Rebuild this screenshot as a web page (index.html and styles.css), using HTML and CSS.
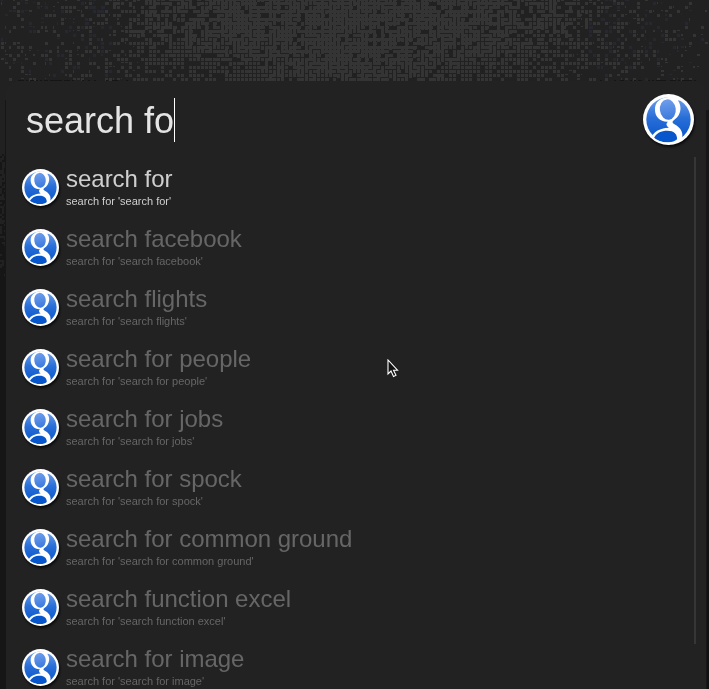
FILE: index.html
```html
<!DOCTYPE html>
<html lang="en">
<head>
<meta charset="utf-8">
<title>Search</title>
<link rel="stylesheet" href="styles.css">
</head>
<body>
<canvas class="backdrop" id="backdrop" width="709" height="689"></canvas>
<svg class="defs" width="0" height="0" aria-hidden="true">
  <defs>
    <linearGradient id="blue" x1="0" y1="0" x2="0" y2="1">
      <stop offset="0" stop-color="#6f9fe8"/>
      <stop offset=".45" stop-color="#2a6fd8"/>
      <stop offset="1" stop-color="#0554c9"/>
    </linearGradient>
    <linearGradient id="bowl" x1="0" y1="0" x2="0" y2="1">
      <stop offset="0" stop-color="#6f9deb"/>
      <stop offset="1" stop-color="#3a79dc"/>
    </linearGradient>
    <clipPath id="disc"><circle cx="77" cy="77" r="70"/></clipPath>
    <symbol id="badge" viewBox="0 0 154 154">
      <circle cx="77" cy="77" r="77" fill="#fff"/>
      <circle cx="77" cy="77" r="67" fill="url(#blue)"/>
      <g clip-path="url(#disc)">
        <path fill="#fff" d="M73 10C88 8 103 11 120 19L105 20C111 27 114 36 113 47C111 63 103 73 93 79C87 83 88 87 95 91C110 99 119 110 119 124C119 136 110 145 101 150H34C29 145 25 140 24 134C32 114 48 104 78 102C69 95 69 89 75 84C52 85 36 69 36 47C36 25 52 12 73 10Z"/>
        <ellipse cx="75" cy="47" rx="24" ry="31" fill="url(#bowl)" transform="rotate(-7 75 47)"/>
        <path fill="#0756cb" d="M32 135C40 118 54 111 74 111C93 111 103 121 103 137C96 143 88 146 77 146C59 146 43 142 32 135Z"/>
      </g>
    </symbol>
  </defs>
</svg>
<main class="panel">
  <header class="query">
    <div class="field"><span class="typed">search fo</span><span class="caret"></span></div>
    <svg class="badge large"><use href="#badge"/></svg>
  </header>
  <div class="body">
    <ul class="results">
      <li class="result active"><svg class="badge"><use href="#badge"/></svg><div><p class="name">search for</p><p class="hint">search for 'search for'</p></div></li>
      <li class="result"><svg class="badge"><use href="#badge"/></svg><div><p class="name">search facebook</p><p class="hint">search for 'search facebook'</p></div></li>
      <li class="result"><svg class="badge"><use href="#badge"/></svg><div><p class="name">search flights</p><p class="hint">search for 'search flights'</p></div></li>
      <li class="result"><svg class="badge"><use href="#badge"/></svg><div><p class="name">search for people</p><p class="hint">search for 'search for people'</p></div></li>
      <li class="result"><svg class="badge"><use href="#badge"/></svg><div><p class="name">search for jobs</p><p class="hint">search for 'search for jobs'</p></div></li>
      <li class="result"><svg class="badge"><use href="#badge"/></svg><div><p class="name">search for spock</p><p class="hint">search for 'search for spock'</p></div></li>
      <li class="result"><svg class="badge"><use href="#badge"/></svg><div><p class="name">search for common ground</p><p class="hint">search for 'search for common ground'</p></div></li>
      <li class="result"><svg class="badge"><use href="#badge"/></svg><div><p class="name">search function excel</p><p class="hint">search for 'search function excel'</p></div></li>
      <li class="result"><svg class="badge"><use href="#badge"/></svg><div><p class="name">search for image</p><p class="hint">search for 'search for image'</p></div></li>
    </ul>
    <div class="scrollbar"></div>
  </div>
</main>
<svg class="cursor" viewBox="0 0 12 19"><path d="M1 1V15L4 12L6.5 17.5L9 16.3L6.5 11.2H10.5Z" fill="#111" stroke="#fff" stroke-width="1.1"/></svg>
<script src="backdrop.js"></script>
</body>
</html>
```
FILE: styles.css
```css
* { box-sizing: border-box; }
body {
  margin: 0;
  width: 709px;
  height: 689px;
  overflow: hidden;
  position: relative;
  background: #212121;
  font-family: "Liberation Sans", Arial, sans-serif;
}
.backdrop { position: absolute; inset: 0; }
.defs { position: absolute; }
.panel {
  position: relative;
  height: 608px;
  margin: 81px 3px 0 6px;
  background: #222;
  border-radius: 12px 12px 0 0;
  overflow: hidden;
}
.query {
  display: flex;
  justify-content: space-between;
  padding: 13px 12px 0 20px;
  height: 76px;
}
.field {
  display: flex;
  height: 52px;
  line-height: 54px;
  font-size: 36px;
  color: #e4e4e4;
}
.caret { width: 1px; height: 44px; margin-top: 4px; background: #fff; }
.badge {
  flex: none;
  width: 37px;
  height: 37px;
  overflow: visible;
  filter: drop-shadow(1px 2px 1px #0a0a0a);
}
.badge.large { width: 51px; height: 51px; }
.body {
  display: flex;
  justify-content: space-between;
  height: 532px;
  padding-right: 10px;
}
.results { list-style: none; margin: 0; padding: 0 0 0 16px; }
.result {
  display: flex;
  gap: 7px;
  height: 60px;
  padding-top: 12px;
  color: #666;
}
.active { color: #cfcfcf; }
.result p { margin: 0; white-space: nowrap; }
.result .name { font-size: 24px; line-height: 28px; margin-top: -4px; letter-spacing: -0.02px; }
.result .hint { font-size: 11px; line-height: 16px; }
.scrollbar { width: 2px; height: 487px; background: #363636; }
.cursor { position: absolute; left: 387px; top: 359px; width: 12px; height: 19px; }
```
FILE: backdrop.js
```javascript
const ctx = document.getElementById('backdrop').getContext('2d');
let seed = 7341;
function rand() {
  seed = (seed * 1664525 + 1013904223) >>> 0;
  return seed / 4294967296;
}
ctx.fillStyle = '#212121';
ctx.fillRect(0, 0, 709, 689);

// Tiles fade out away from the centre and fuse together near it.
for (let y = -2; y < 80; y += 4) {
  for (let x = 1; x < 707; x += 4) {
    const d = Math.abs(x - 350) / 350;
    const density = Math.min(0.92, 1.3 - d * 1.05 - (y > 65 ? 0.12 : 0));
    if (rand() > density) continue;
    ctx.fillStyle = d > 0.68 && rand() < 0.35 ? '#27272f' : '#343434';
    if (d > 0.6 && rand() < (d - 0.5) * 1.4) {
      ctx.fillRect(x, y, 1 + Math.floor(rand() * 3), 1 + Math.floor(rand() * 3));
      continue;
    }
    ctx.fillRect(x, y, 3, 3);
    const fuse = Math.min(0.8, Math.max(0, 1.3 - d * 1.6 - Math.max(0, y - 30) / 60));
    if (rand() < fuse) ctx.fillRect(x + 3, y, 1, 3);
    if (rand() < fuse && y < 76) ctx.fillRect(x, y + 3, 3, 1);
  }
}

// Broken dark outline along the panel's top edge and corners.
ctx.fillStyle = '#151515';
for (let x = 18; x < 696; x += 2) {
  if (rand() < (x < 70 || x > 650 ? 0.7 : x < 130 || x > 590 ? 0.3 : 0)) ctx.fillRect(x, 80, 2, 1);
}

// Shaded gutters beside the panel.
ctx.fillStyle = '#161616';
ctx.fillRect(0, 315, 6, 374);
ctx.fillRect(706, 110, 3, 579);
ctx.fillRect(5, 100, 1, 215);
for (let y = 150; y < 315; y += 2) {
  for (let x = 0; x < 6; x += 2) {
    if (rand() < (y - 100) / 190) ctx.fillRect(x, y, 2, 2);
  }
}
ctx.fillStyle = '#101010';
ctx.fillRect(707, 330, 2, 359);
```
